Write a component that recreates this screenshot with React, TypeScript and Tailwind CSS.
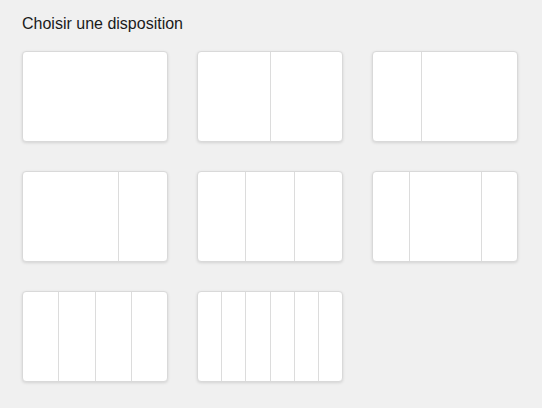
const layouts: number[][] = [
  [1],
  [1, 1],
  [1, 2],
  [2, 1],
  [1, 1, 1],
  [1, 2, 1],
  [1, 1, 1, 1],
  [1, 1, 1, 1, 1, 1],
];

function LayoutCard({ cols }: { cols: number[] }) {
  return (
    <button className="flex w-[146px] h-[91px] overflow-hidden rounded-[4px] border border-[#d9d9d9] bg-white shadow-[0_1px_3px_rgba(0,0,0,0.12)]">
      {cols.map((c, i) => (
        <div
          key={i}
          style={{ flexGrow: c, flexBasis: 0 }}
          className={i > 0 ? "h-full border-l border-[#dcdcdc]" : "h-full"}
        />
      ))}
    </button>
  );
}

export default function App() {
  return (
    <div className="min-h-[408px] w-[542px] bg-[#f0f0f0] px-[22px] pt-3 font-['Liberation_Sans',Arial,sans-serif]">
      <h2 className="text-[16px] leading-6 text-[#1a1a1a]">Choisir une disposition</h2>
      <div className="mt-[15px] grid grid-cols-[146px_146px_146px] gap-x-[29px] gap-y-[29px]">
        {layouts.map((cols, i) => (
          <LayoutCard key={i} cols={cols} />
        ))}
      </div>
    </div>
  );
}
